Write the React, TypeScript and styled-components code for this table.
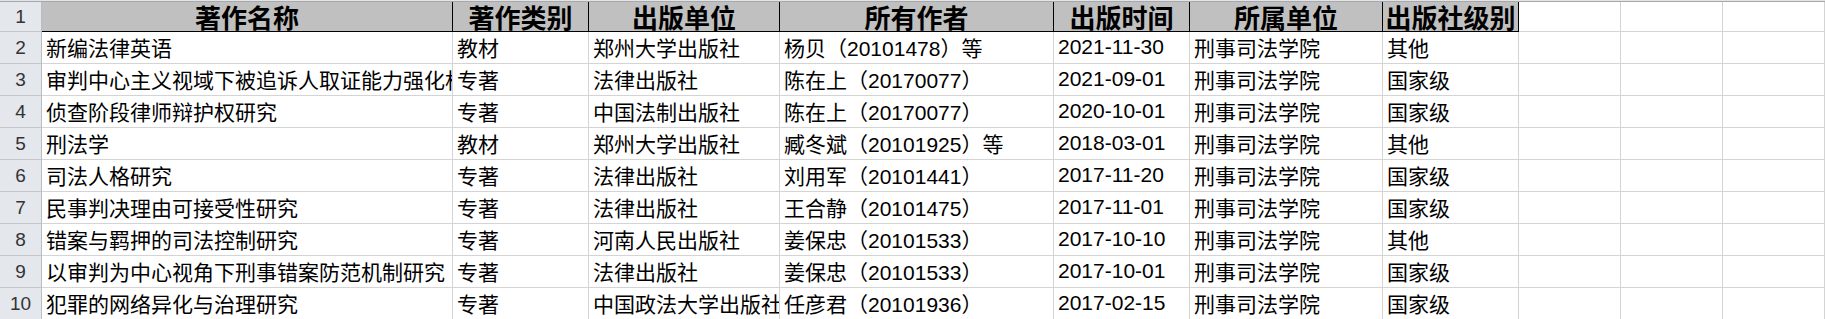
import React from "react"
import styled, { createGlobalStyle } from "styled-components"

const GlobalStyle = createGlobalStyle`
  html, body {
    margin: 0;
    padding: 0;
    background: #ffffff;
    overflow: hidden;
  }
`

const headers = [
  "著作名称",
  "著作类别",
  "出版单位",
  "所有作者",
  "出版时间",
  "所属单位",
  "出版社级别",
]

const rows: string[][] = [
  ["新编法律英语", "教材", "郑州大学出版社", "杨贝（20101478）等", "2021-11-30", "刑事司法学院", "其他"],
  ["审判中心主义视域下被追诉人取证能力强化机制研究", "专著", "法律出版社", "陈在上（20170077）", "2021-09-01", "刑事司法学院", "国家级"],
  ["侦查阶段律师辩护权研究", "专著", "中国法制出版社", "陈在上（20170077）", "2020-10-01", "刑事司法学院", "国家级"],
  ["刑法学", "教材", "郑州大学出版社", "臧冬斌（20101925）等", "2018-03-01", "刑事司法学院", "其他"],
  ["司法人格研究", "专著", "法律出版社", "刘用军（20101441）", "2017-11-20", "刑事司法学院", "国家级"],
  ["民事判决理由可接受性研究", "专著", "法律出版社", "王合静（20101475）", "2017-11-01", "刑事司法学院", "国家级"],
  ["错案与羁押的司法控制研究", "专著", "河南人民出版社", "姜保忠（20101533）", "2017-10-10", "刑事司法学院", "其他"],
  ["以审判为中心视角下刑事错案防范机制研究", "专著", "法律出版社", "姜保忠（20101533）", "2017-10-01", "刑事司法学院", "国家级"],
  ["犯罪的网络异化与治理研究", "专著", "中国政法大学出版社", "任彦君（20101936）", "2017-02-15", "刑事司法学院", "国家级"],
]

// blank columns to the right of the data
const EMPTY_COLS = 3

export default function App() {
  return (
    <>
      <GlobalStyle />
      <Sheet>
        <TopStrip />
        <Grid>
          <RowHead>1</RowHead>
          {headers.map((h) => (
            <HeaderCell key={h}>{h}</HeaderCell>
          ))}
          {Array.from({ length: EMPTY_COLS }).map((_, i) => (
            <Cell key={`h-empty-${i}`} />
          ))}

          {rows.map((r, ri) => (
            <React.Fragment key={ri}>
              <RowHead>{ri + 2}</RowHead>
              {r.map((v, ci) => (
                <Cell key={ci}>{v}</Cell>
              ))}
              {Array.from({ length: EMPTY_COLS }).map((_, i) => (
                <Cell key={`e-${i}`} />
              ))}
            </React.Fragment>
          ))}
        </Grid>
      </Sheet>
    </>
  )
}

const Sheet = styled.div`
  width: 1825px;
  height: 319px;
  overflow: hidden;
  background: #ffffff;
`

const TopStrip = styled.div`
  height: 1px;
  background: #e2e4e8;
  border-bottom: 1px solid #a6a8ac;
`

const Grid = styled.div`
  display: grid;
  grid-template-columns: 42px 411px 136px 191px 274px 136px 193px 136px 102px 102px 102px;
  grid-template-rows: 30px repeat(9, 32px);
`

const RowHead = styled.div`
  box-sizing: border-box;
  display: flex;
  align-items: center;
  justify-content: center;
  background: #e4e7ec;
  border-right: 1px solid #b9bcc1;
  border-bottom: 1px solid #c3c6cb;
  font-family: "Liberation Sans", Arial, sans-serif;
  font-size: 19px;
  color: #333333;
`

const HeaderCell = styled.div`
  box-sizing: border-box;
  display: flex;
  align-items: flex-end;
  justify-content: center;
  background: #c0c0c0;
  border-right: 1px solid #000000;
  border-bottom: 1px solid #000000;
  font-family: "Noto Sans CJK SC", sans-serif;
  font-weight: 700;
  font-size: 26px;
  line-height: 29px;
  color: #000000;
  white-space: nowrap;
`

const Cell = styled.div`
  box-sizing: border-box;
  display: flex;
  align-items: center;
  padding: 0 0 2px 4px;
  border-right: 1px solid #d4d4d4;
  border-bottom: 1px solid #d4d4d4;
  font-family: "Liberation Sans", "Noto Sans CJK SC", sans-serif;
  font-size: 21px;
  color: #000000;
  white-space: nowrap;
  overflow: hidden;
`
